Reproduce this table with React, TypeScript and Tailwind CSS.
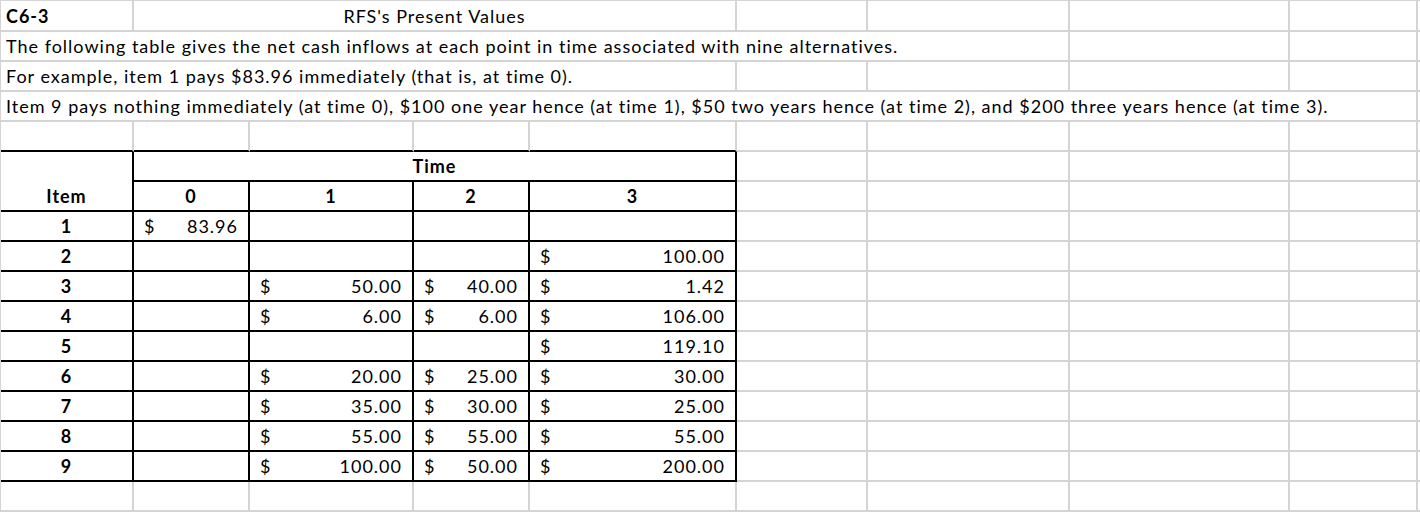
import React from "react";

// column widths include the 2px right gridline
const GRID =
  "grid grid-cols-[133px_116px_164px_116px_207px_131px_202px_220px_128px_100px]";

type CellProps = {
  className?: string;
  r?: boolean; // black right border
  b?: boolean; // black bottom border
  first?: boolean;
  children?: React.ReactNode;
};

const Cell: React.FC<CellProps> = ({ className = "", r, b, first, children }) => (
  <div
    className={`flex items-end border-r-2 border-b-2 pb-[4px] ${first ? "h-[31px]" : "h-[30px]"} ${
      r ? "border-r-black" : "border-r-[#d4d4d4]"
    } ${b ? "border-b-black" : "border-b-[#d4d4d4]"} ${className}`}
  >
    {children}
  </div>
);

const Blank = ({ n, first }: { n: number; first?: boolean }) => (
  <>
    {Array.from({ length: n }).map((_, i) => (
      <Cell key={i} first={first} />
    ))}
  </>
);

const Money = ({ v }: { v?: string }) => (
  <Cell r b>
    {v && (
      <div className="flex w-full justify-between pl-[10px] pr-[10px]">
        <span>$</span>
        <span>{v}</span>
      </div>
    )}
  </Cell>
);

const items: (string | undefined)[][] = [
  ["83.96", undefined, undefined, undefined],
  [undefined, undefined, undefined, "100.00"],
  [undefined, "50.00", "40.00", "1.42"],
  [undefined, "6.00", "6.00", "106.00"],
  [undefined, undefined, undefined, "119.10"],
  [undefined, "20.00", "25.00", "30.00"],
  [undefined, "35.00", "30.00", "25.00"],
  [undefined, "55.00", "55.00", "55.00"],
  [undefined, "100.00", "50.00", "200.00"],
];

export default function App() {
  return (
    <div className="h-[512px] w-[1420px] overflow-hidden bg-white font-['Lato',sans-serif] text-[18px] leading-[20px] tracking-[1px] text-black">
      <div className={`${GRID} border-t border-l border-[#d4d4d4]`}>
        {/* row 1 */}
        <Cell first className="pl-[5px] font-bold">C6-3</Cell>
        <Cell first className="col-span-4 justify-center">RFS's Present Values</Cell>
        <Blank n={5} first />

        {/* rows 2-4: overflowing text */}
        <Cell className="col-span-7 whitespace-nowrap pl-[5px]">
          The following table gives the net cash inflows at each point in time associated with nine alternatives.
        </Cell>
        <Blank n={3} />
        <Cell className="col-span-5 whitespace-nowrap pl-[5px]">
          For example, item 1 pays $83.96 immediately (that is, at time 0).
        </Cell>
        <Blank n={5} />
        <Cell className="col-span-9 whitespace-nowrap pl-[5px]">
          Item 9 pays nothing immediately (at time 0), $100 one year hence (at time 1), $50 two years hence (at time 2), and $200 three years hence (at time 3).
        </Cell>
        <Blank n={1} />

        {/* row 5: top of table */}
        <Cell b />
        <Cell b />
        <Cell b />
        <Cell b />
        <Cell b />
        <Blank n={5} />

        {/* table header */}
        <div className="row-span-2 flex h-[60px] items-end justify-center border-r-2 border-b-2 border-r-black border-b-black pb-[4px] font-bold">
          Item
        </div>
        <Cell r b className="col-span-4 justify-center font-bold">Time</Cell>
        <Blank n={5} />
        {["0", "1", "2", "3"].map((t) => (
          <Cell key={t} r b className="justify-center font-bold">
            {t}
          </Cell>
        ))}
        <Blank n={5} />

        {/* items */}
        {items.map((row, i) => (
          <React.Fragment key={i}>
            <Cell r b className="justify-center font-bold">
              {i + 1}
            </Cell>
            {row.map((v, j) => (
              <Money key={j} v={v} />
            ))}
            <Blank n={5} />
          </React.Fragment>
        ))}

        {/* trailing empty row */}
        <Blank n={10} />
      </div>
    </div>
  );
}
